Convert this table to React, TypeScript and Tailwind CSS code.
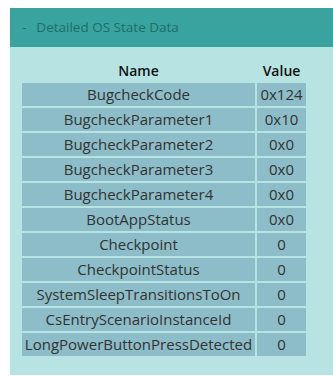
import React from 'react';

const rows: [string, string][] = [
  ['BugcheckCode', '0x124'],
  ['BugcheckParameter1', '0x10'],
  ['BugcheckParameter2', '0x0'],
  ['BugcheckParameter3', '0x0'],
  ['BugcheckParameter4', '0x0'],
  ['BootAppStatus', '0x0'],
  ['Checkpoint', '0'],
  ['CheckpointStatus', '0'],
  ['SystemSleepTransitionsToOn', '0'],
  ['CsEntryScenarioInstanceId', '0'],
  ['LongPowerButtonPressDetected', '0'],
];

const App = () => {
  return (
    <div className="h-[376px] w-[333px] bg-white pl-[10px] pt-[8px] font-['Open_Sans',sans-serif]">
      <div className="flex h-[367px] flex-col bg-[#b7e4e3]">
        <div className="flex h-[39px] items-center gap-[10px] bg-[#38a39f] pl-[12px] text-[13.5px] text-[#1f6e6a]">
          <span>-</span>
          <span>Detailed OS State Data</span>
        </div>
        <div className="pl-[10px] pt-[9px]">
          <table className="border-separate border-spacing-[2px]">
            <thead>
              <tr>
                <th className="h-[23px] w-[233px] pt-[2px] text-center text-[14px] font-semibold leading-none text-[#111]">
                  Name
                </th>
                <th className="h-[23px] w-[49px] pt-[2px] text-center text-[14px] font-semibold leading-none text-[#111]">
                  Value
                </th>
              </tr>
            </thead>
            <tbody>
              {rows.map(([name, value]) => (
                <tr key={name}>
                  <td className="h-[23px] bg-[#8dbdc8] p-0 text-center text-[15px] leading-none text-[#333]">
                    {name}
                  </td>
                  <td className="h-[23px] bg-[#8dbdc8] p-0 text-center text-[15px] leading-none text-[#333]">
                    {value}
                  </td>
                </tr>
              ))}
            </tbody>
          </table>
        </div>
      </div>
    </div>
  );
};

export default App;
